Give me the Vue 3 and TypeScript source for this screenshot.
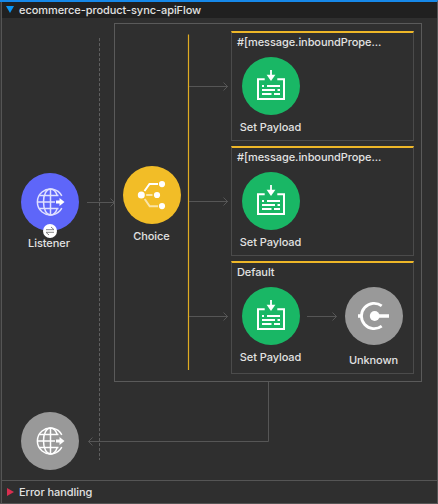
<script setup lang="ts">
interface FlowNode {
  kind: 'listener' | 'choice' | 'response'
  label: string
}
interface Branch {
  title: string
  steps: { kind: 'payload' | 'unknown'; label: string }[]
}

const nodes: FlowNode[] = [
  { kind: 'listener', label: 'Listener' },
  { kind: 'choice', label: 'Choice' },
  { kind: 'response', label: '' },
]

const branches: Branch[] = [
  { title: '#[message.inboundPrope...', steps: [{ kind: 'payload', label: 'Set Payload' }] },
  { title: '#[message.inboundPrope...', steps: [{ kind: 'payload', label: 'Set Payload' }] },
  {
    title: 'Default',
    steps: [
      { kind: 'payload', label: 'Set Payload' },
      { kind: 'unknown', label: 'Unknown' },
    ],
  },
]
</script>

<template>
  <section class="flow">
    <header class="flow-header">
      <svg class="caret" viewBox="0 0 8 7"><path d="M0 0H8L4 7Z" fill="#0a96f5" /></svg>
      <span class="header-text">ecommerce-product-sync-apiFlow</span>
    </header>

    <main class="canvas">
      <div class="scope">
        <div class="branches">
          <article v-for="(branch, i) in branches" :key="i" class="branch">
            <h3 class="branch-title">{{ branch.title }}</h3>
            <div class="steps">
              <div v-for="step in branch.steps" :key="step.kind" class="step" :class="step.kind">
                <svg class="disc" viewBox="0 0 58 58">
                  <circle cx="29" cy="29" r="29" />
                  <g v-if="step.kind === 'payload'" fill="none" stroke="#fff" stroke-width="2">
                    <path d="M22.7 22.3H16V42H42V22.3H35.3" />
                    <path d="M29 13V18.500" stroke-width="1.8" />
                    <path d="M24.6 17.800H33.4L29 24Z" fill="#fff" stroke="none" />
                    <path d="M20 29H22M25 29H38M20 33H33M35.5 33H38M20 37H29.5M32 37H38" stroke-width="1.8" />
                  </g>
                  <g v-else fill="none" stroke="#fff">
                    <path d="M36.7 18.8A12.7 12.7 0 1 0 36.7 39.2" stroke-width="2.8" />
                    <path d="M13 29H17M29 29H44" stroke-width="3.6" />
                    <circle class="hub" cx="29.7" cy="29" r="4.900" stroke="none" />
                  </g>
                </svg>
                <span class="label">{{ step.label }}</span>
              </div>
            </div>
          </article>
        </div>
      </div>

      <svg class="wires" viewBox="0 0 438 461">
        <g fill="none" stroke="#565656">
          <path d="M99.5 20V442" stroke-dasharray="3.2 1.8" stroke="#5f5f5f" />
          <path d="M87 184.5H115M110.500 180.500L114.500 184.5L110.500 188.500" />
          <path d="M189 68.5H228M223.500 64.500L227.500 68.5L223.500 72.500" />
          <path d="M189 183.5H228M223.500 179.500L227.500 183.5L223.500 187.500" />
          <path d="M189 298.5H228M223.500 294.500L227.500 298.5L223.500 302.500" />
          <path d="M307 298.5H336.500M332.500 294.500L336.500 298.500L332.500 302.500" />
          <path d="M268.500 364V423.500H88.500M92.500 419.500L88.500 423.500L92.500 427.500" />
        </g>
        <path d="M188.5 16.5V352" stroke="#e0ab22" stroke-width="1.2" />
      </svg>

      <div v-for="node in nodes" :key="node.kind" class="node" :class="node.kind">
        <svg class="disc" viewBox="0 0 58 58">
          <circle cx="29" cy="29" r="29" />
          <g v-if="node.kind === 'choice'" fill="none" stroke="#fff" stroke-width="2">
            <path d="M21.500 25L26.500 18H35" />
            <path d="M23.200 29H29.500M21.700 33L26.700 40.200H35" opacity=".6" />
            <g fill="#fff" stroke="none">
              <circle class="dot" cx="18.300" cy="29" r="3.500" />
              <circle class="dot" cx="39" cy="18.100" r="3.100" />
              <circle class="dot" cx="34" cy="29" r="3.100" />
              <circle class="dot" cx="39" cy="40.100" r="3.100" />
            </g>
          </g>
          <g v-else class="globe" fill="none" stroke-width="1.500">
            <path d="M40.800 22.800A13 13 0 1 0 40.800 35.200" />
            <path d="M29.500 16V42M36.300 22.500C34.500 17.500 32 16 29.500 16C25.500 16 22.500 21.500 22.500 29S25.500 42 29.500 42C32 42 34.500 40.500 36.300 35.500M18.500 22.500H37.500M16.500 29H34M18.500 35.500H37.500" />
            <path d="M35 27.400H38.500V25L43.500 29L38.500 33V30.600H35Z" class="arrow" />
          </g>
        </svg>
        <svg v-if="node.kind === 'listener'" class="badge" viewBox="0 0 14 14">
          <circle cx="7" cy="7" r="7" />
          <path d="M3 5.700H11L8 3M11 8.300H3L6 11" fill="none" stroke="#777" stroke-width=".9" />
        </svg>
        <span v-if="node.label" class="label">{{ node.label }}</span>
      </div>
    </main>

    <footer class="errors">
      <svg class="error-caret" viewBox="0 0 7 8"><path d="M0 0L7 4L0 8Z" fill="#d92f50" /></svg>
      <span class="header-text">Error handling</span>
    </footer>
  </section>
</template>

<style>
body {
  background: #2f2f2f;
}
</style>

<style scoped>
.flow {
  box-sizing: border-box;
  width: 438px;
  height: 504px;
  display: flex;
  flex-direction: column;
  border-top: 2px solid #1688e8;
  border-right: 1px solid #555;
  border-bottom: 1px solid #555;
  background: #2f2f2f;
  box-shadow: inset 1px 0 #383838, inset 2px 0 #555;
  color: #e2e2e2;
  font: 500 11px/14px Inter, "Liberation Sans", sans-serif;
  letter-spacing: -0.07px;
  overflow: hidden;
}
.flow-header {
  display: flex;
  align-items: center;
  gap: 5px;
  height: 16px;
  margin-left: 2px;
  padding-left: 4px;
  flex: none;
  background: #202020;
}
.caret {
  width: 8px;
  height: 7px;
  margin-bottom: 2px;
}
.header-text {
  white-space: nowrap;
}
.canvas {
  position: relative;
  height: 462px;
  flex: none;
}
.scope {
  box-sizing: border-box;
  display: flex;
  justify-content: flex-end;
  width: 308px;
  height: 359px;
  margin: 5px 0 0 114px;
  padding: 7px 7px 0 0;
  border: 1px solid #5a5a5a;
}
.branches {
  display: flex;
  flex-direction: column;
  gap: 5px;
  width: 183px;
}
.branch {
  box-sizing: border-box;
  height: 110px;
  border: 1px solid #4b4b4b;
  border-top: 2px solid #eeb728;
}
.branch:last-child {
  height: 113px;
}
.branch-title {
  margin: 2px 0 0 5px;
  font: inherit;
  line-height: 14px;
  white-space: nowrap;
}
.steps {
  display: flex;
  gap: 45px;
  padding: 8px 0 0 10px;
}
.step,
.node {
  display: flex;
  flex-direction: column;
  align-items: center;
  width: 58px;
}
.disc {
  display: block;
  width: 58px;
  height: 58px;
  flex: none;
}
.label {
  margin: 5px 1px 0 0;
  line-height: 14px;
  white-space: nowrap;
}
.payload {
  fill: #19b765;
}
.unknown {
  fill: #999;
}
.unknown .label {
  margin-top: 8px;
}
.hub,
.dot {
  fill: #fff;
}
.wires {
  position: absolute;
  left: 0;
  top: 0;
  width: 438px;
  height: 461px;
}
.node {
  position: absolute;
}
.listener {
  left: 21px;
  top: 155px;
  fill: #5e66f9;
}
.listener .label {
  margin-right: 2px;
}
.choice {
  left: 123px;
  top: 148px;
  fill: #f2bd27;
}
.response {
  left: 21px;
  top: 394px;
  fill: #999;
}
.globe {
  stroke: #e0e1ff;
}
.response .globe {
  stroke: #fff;
}
.globe .arrow {
  fill: #fff;
  stroke: none;
}
.badge {
  position: absolute;
  top: 51px;
  left: 22px;
  width: 14px;
  height: 14px;
  fill: #fff;
}
.errors {
  display: flex;
  align-items: center;
  gap: 5px;
  flex: 1;
  margin-left: 1px;
  padding-left: 6px;
  border-top: 1px solid #555;
}
.error-caret {
  width: 7px;
  height: 8px;
  margin-bottom: 1px;
}
</style>
